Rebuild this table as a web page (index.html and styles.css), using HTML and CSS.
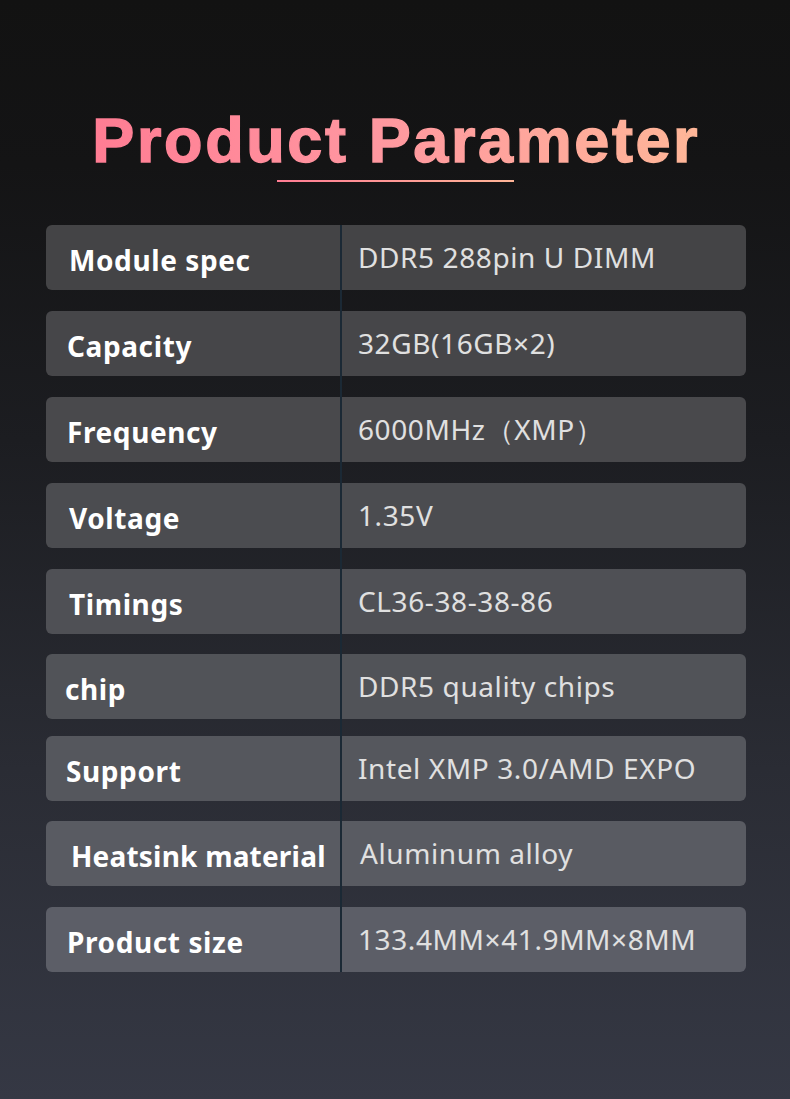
FILE: index.html
```html
<!DOCTYPE html>
<html lang="en">
<head>
<meta charset="utf-8">
<title>Product Parameter</title>
<link rel="stylesheet" href="styles.css">
</head>
<body>
<main class="page">
  <header class="heading">
    <h1 class="title">Product Parameter</h1>
    <div class="underline"></div>
  </header>
  <section class="specs">
    <div class="row r1"><div class="label">Module spec</div><div class="value">DDR5 288pin U DIMM</div></div>
    <div class="row r2"><div class="label l-tight">Capacity</div><div class="value">32GB(16GB×2)</div></div>
    <div class="row r3"><div class="label l-tight">Frequency</div><div class="value">6000MHz（XMP）</div></div>
    <div class="row r4"><div class="label">Voltage</div><div class="value">1.35V</div></div>
    <div class="row r5"><div class="label">Timings</div><div class="value">CL36-38-38-86</div></div>
    <div class="row r6 tight-gap"><div class="label l-chip">chip</div><div class="value">DDR5 quality chips</div></div>
    <div class="row r7 short-gap"><div class="label l-support">Support</div><div class="value">Intel XMP 3.0/AMD EXPO</div></div>
    <div class="row r8 tight-gap"><div class="label l-wide">Heatsink material</div><div class="value v-wide">Aluminum alloy</div></div>
    <div class="row r9"><div class="label l-tight">Product size</div><div class="value">133.4MM×41.9MM×8MM</div></div>
  </section>
</main>
</body>
</html>
```
FILE: styles.css
```css
html, body {
  margin: 0;
  padding: 0;
}
body {
  width: 790px;
  height: 1099px;
  overflow: hidden;
  background: linear-gradient(180deg, #121212 0%, #141415 15%, #1c1d21 40%, #2a2c34 70%, #353844 100%);
  font-family: "Noto Sans", "Open Sans", sans-serif;
}
.page {
  width: 790px;
  height: 1099px;
}
.heading {
  padding-top: 104px;
  display: flex;
  flex-direction: column;
  align-items: center;
}
.title {
  margin: 0;
  font-family: "Liberation Sans", Arial, sans-serif;
  font-weight: 700;
  font-size: 63px;
  line-height: 72px;
  letter-spacing: 2.6px;
  padding-left: 2.6px;
  background: linear-gradient(90deg, #ff7c93 0%, #ff96a0 45%, #ffb798 100%);
  -webkit-background-clip: text;
  background-clip: text;
  color: transparent;
  -webkit-text-stroke: 1.4px transparent;
}
.underline {
  margin-top: 4px;
  width: 237px;
  height: 2px;
  background: linear-gradient(90deg, #ff7c93, #ffb597);
}
.specs {
  position: relative;
  margin: 43px 0 0 46px;
  width: 700px;
  display: flex;
  flex-direction: column;
  gap: 21px;
}
.specs::after {
  content: "";
  position: absolute;
  left: 294px;
  top: 0;
  bottom: 0;
  width: 2px;
  background: #1b2935;
}
.row {
  height: 65px;
  border-radius: 6px;
  display: flex;
  align-items: stretch;
}
.tight-gap {
  margin-top: -1px;
}
.short-gap {
  margin-top: -4px;
}
.r1 { background: #444446; }
.r2 { background: #464649; }
.r3 { background: #49494c; }
.r4 { background: #4b4c50; }
.r5 { background: #4f5055; }
.r6 { background: #515358; }
.r7 { background: #55575d; }
.r8 { background: #595b62; }
.r9 { background: #5c5e67; }
.label {
  width: 294px;
  box-sizing: border-box;
  padding: 17px 0 0 23px;
  font-size: 28px;
  font-weight: 700;
  color: #ffffff;
  line-height: 36px;
  letter-spacing: 0.6px;
  white-space: nowrap;
}
.l-tight { padding-left: 21px; }
.l-chip { padding-left: 19px; }
.l-support { padding-left: 20px; }
.l-wide { padding-left: 25px; letter-spacing: 0.2px; }
.value {
  flex: 1;
  padding: 14px 0 0 18px;
  font-size: 28px;
  font-weight: 400;
  color: #e0e0e0;
  line-height: 36px;
  letter-spacing: 0.6px;
  white-space: nowrap;
}
.v-wide { padding-left: 20px; }
```
